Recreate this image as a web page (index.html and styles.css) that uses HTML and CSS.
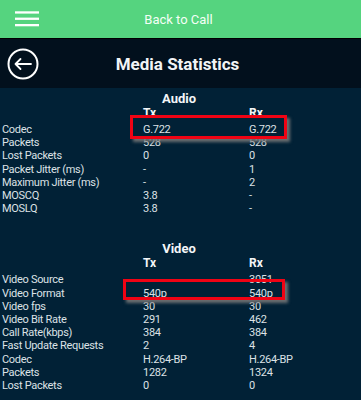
FILE: index.html
```html
<!DOCTYPE html>
<html lang="en">
<head>
    <meta charset="UTF-8">
    <meta name="viewport" content="width=device-width, initial-scale=1.0">
    <title>Media Statistics</title>
    <link rel="stylesheet" href="styles.css">
</head>
<body>
    <!-- Barra superior -->
    <div class="topbar">
        <svg class="menu" width="24" height="38" viewBox="0 0 24 38">
            <rect x="0" y="11.3" width="24" height="2.3" fill="#fff"/>
            <rect x="0" y="17.6" width="24" height="2.3" fill="#fff"/>
            <rect x="0" y="24" width="24" height="2.3" fill="#fff"/>
        </svg>
        <div class="topbar-title">Back to Call</div>
    </div>

    <!-- Cabecera -->
    <div class="titlebar">
        <svg class="back" width="32" height="32" viewBox="0 0 32 32">
            <circle cx="16" cy="16" r="14.5" fill="none" stroke="#fff" stroke-width="2"/>
            <path d="M8.5 16 H24 M13.5 11 L8.5 16 L13.5 21" fill="none" stroke="#fff" stroke-width="1.8" stroke-linecap="round" stroke-linejoin="round"/>
        </svg>
        <div class="title">Media Statistics</div>
    </div>

    <div class="stats">
        <div class="section audio">
            <div class="section-title">Audio</div>
            <div class="table">
                <div class="head"><span></span><span>Tx</span><span>Rx</span></div>
                <div class="row"><span>Codec</span><span>G.722</span><span>G.722</span></div>
                <div class="row"><span>Packets</span><span>528</span><span>528</span></div>
                <div class="row"><span>Lost Packets</span><span>0</span><span>0</span></div>
                <div class="row"><span>Packet Jitter (ms)</span><span>-</span><span>1</span></div>
                <div class="row"><span>Maximum Jitter (ms)</span><span>-</span><span>2</span></div>
                <div class="row"><span>MOSCQ</span><span>3.8</span><span>-</span></div>
                <div class="row"><span>MOSLQ</span><span>3.8</span><span>-</span></div>
            </div>
        </div>

        <div class="section video">
            <div class="section-title">Video</div>
            <div class="table">
                <div class="head"><span></span><span>Tx</span><span>Rx</span></div>
                <div class="row"><span>Video Source</span><span></span><span>3051</span></div>
                <div class="row"><span>Video Format</span><span>540p</span><span>540p</span></div>
                <div class="row"><span>Video fps</span><span>30</span><span>30</span></div>
                <div class="row"><span>Video Bit Rate</span><span>291</span><span>462</span></div>
                <div class="row"><span>Call Rate(kbps)</span><span>384</span><span>384</span></div>
                <div class="row"><span>Fast Update Requests</span><span>2</span><span>4</span></div>
                <div class="row"><span>Codec</span><span>H.264-BP</span><span>H.264-BP</span></div>
                <div class="row"><span>Packets</span><span>1282</span><span>1324</span></div>
                <div class="row"><span>Lost Packets</span><span>0</span><span>0</span></div>
            </div>
        </div>

        <!-- Marcas rojas -->
        <div class="mark mark-audio"></div>
        <div class="mark mark-video"></div>
    </div>
</body>
</html>
```

FILE: styles.css
```css
body {
    margin: 0;
    font-family: Roboto, "Noto Sans", sans-serif;
    background: #012136;
    width: 361px;
    height: 400px;
    overflow: hidden;
}

.topbar {
    height: 38px;
    background: #55d47f;
    border-bottom: 1px solid #000;
    display: flex;
    align-items: center;
    padding: 0 5px 0 15px;
}

.menu {
    display: block;
    flex: none;
}

.topbar-title {
    flex: 1;
    text-align: center;
    color: #f4fff6;
    font-size: 13px;
    padding-right: 38px;
}

.titlebar {
    height: 49px;
    background: #02101d;
    display: flex;
    align-items: center;
    padding: 0 5px 0 7px;
}

.back {
    display: block;
    flex: none;
}

.title {
    flex: 1;
    text-align: center;
    color: #f2f4f6;
    font-size: 17px;
    font-weight: bold;
    padding-right: 40px;
}

.stats {
    position: relative;
    padding: 3px 5px 0 2px;
    color: #dde2e6;
    font-size: 11px;
    letter-spacing: -0.3px;
}

.section-title {
    text-align: center;
    font-weight: bold;
    font-size: 13px;
    letter-spacing: 0;
    line-height: 16px;
    color: #f4f6f8;
}

.video {
    margin-top: 26px;
}

.head,
.row {
    display: grid;
    grid-template-columns: 141px 106px 1fr;
}

.head {
    font-weight: bold;
    font-size: 12px;
    letter-spacing: 0;
    color: #f4f6f8;
    line-height: 12px;
    margin-bottom: 4px;
}

.row {
    line-height: 13.2px;
    white-space: nowrap;
}

.mark {
    position: absolute;
    border: 3px solid #f00314;
    box-shadow: 3px 3px 3px rgba(120, 120, 120, 0.9);
    box-sizing: border-box;
}

.mark-audio {
    left: 130px;
    top: 27px;
    width: 157px;
    height: 24px;
}

.mark-video {
    left: 123px;
    top: 191px;
    width: 162px;
    height: 21px;
}
```
